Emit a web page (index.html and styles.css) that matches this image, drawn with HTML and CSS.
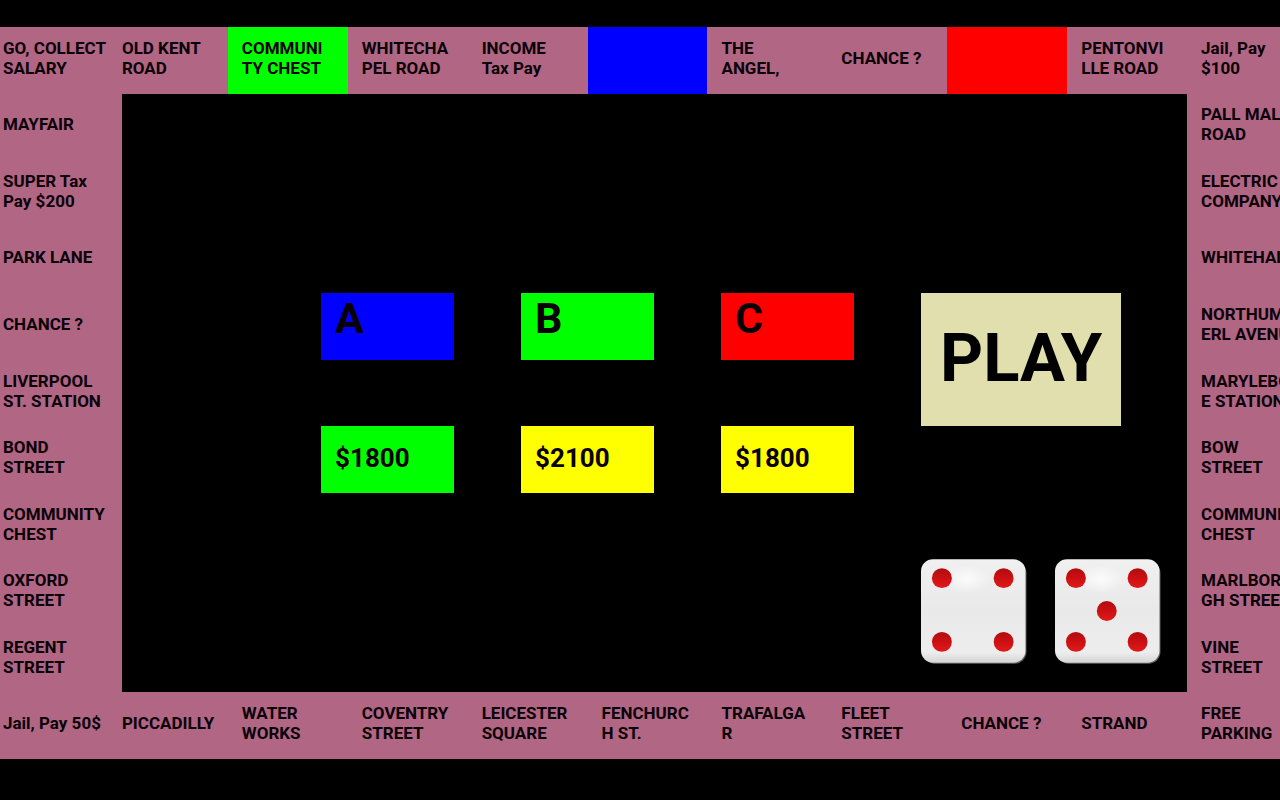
FILE: index.html
```html
<!DOCTYPE html>
<html lang="en">
  <head>
    <meta charset="UTF-8" />
    <meta name="viewport" content="width=device-width, initial-scale=1" />
    <title>Monopoly</title>
    <link rel="stylesheet" href="styles.css">
  </head>
  <body>
    <main class="board">
      <div class="row">
        <div class="tile corner">GO, COLLECT<br>SALARY</div>
        <div class="tile">OLD KENT<br>ROAD</div>
        <div class="tile green">COMMUNI<br>TY CHEST</div>
        <div class="tile">WHITECHA<br>PEL ROAD</div>
        <div class="tile">INCOME<br>Tax Pay</div>
        <div class="tile blue"></div>
        <div class="tile">THE<br>ANGEL,</div>
        <div class="tile">CHANCE ?</div>
        <div class="tile red"></div>
        <div class="tile">PENTONVI<br>LLE ROAD</div>
        <div class="tile">Jail, Pay<br>$100</div>
      </div>

      <div class="middle">
        <div class="side">
          <div class="tile corner">MAYFAIR</div>
          <div class="tile corner">SUPER Tax<br>Pay $200</div>
          <div class="tile corner">PARK LANE</div>
          <div class="tile corner">CHANCE ?</div>
          <div class="tile corner">LIVERPOOL<br>ST. STATION</div>
          <div class="tile corner">BOND<br>STREET</div>
          <div class="tile corner">COMMUNITY<br>CHEST</div>
          <div class="tile corner">OXFORD<br>STREET</div>
          <div class="tile corner">REGENT<br>STREET</div>
        </div>

        <section class="center">
          <div class="player blue">A</div>
          <div class="player green">B</div>
          <div class="player red">C</div>
          <button type="button" class="play-btn">PLAY</button>

          <div class="money green">$1800</div>
          <div class="money yellow">$2100</div>
          <div class="money yellow">$1800</div>

          <div class="dice">
            <svg width="107" height="106" viewBox="0 0 107 106" role="img" aria-label="4">
              <defs>
                <linearGradient id="face" x1="0" y1="0" x2="0" y2="1">
                  <stop offset="0" stop-color="#f0f0f0" />
                  <stop offset="0.5" stop-color="#e9e9e9" />
                  <stop offset="0.9" stop-color="#ededed" />
                  <stop offset="1" stop-color="#d4d4d4" />
                </linearGradient>
                <radialGradient id="shine">
                  <stop offset="0" stop-color="#fff" stop-opacity="0.8" />
                  <stop offset="1" stop-color="#fff" stop-opacity="0" />
                </radialGradient>
                <linearGradient id="pip" x1="0" y1="0" x2="0" y2="1">
                  <stop offset="0" stop-color="#b00c10" />
                  <stop offset="0.5" stop-color="#cc1012" />
                  <stop offset="1" stop-color="#e01a1a" />
                </linearGradient>
              </defs>
              <rect x="2" y="2" width="104" height="103" rx="12" fill="#5c6262" />
              <rect x="0" y="0" width="105" height="104" rx="12" fill="url(#face)" />
              <ellipse cx="46" cy="20" rx="24" ry="14" fill="url(#shine)" />
              <g fill="url(#pip)">
                <circle cx="21" cy="19" r="10" />
                <circle cx="83" cy="19" r="10" />
                <circle cx="21" cy="83" r="10" />
                <circle cx="83" cy="83" r="10" />
              </g>
            </svg>
            <svg width="107" height="106" viewBox="0 0 107 106" role="img" aria-label="5">
              <rect x="2" y="2" width="104" height="103" rx="12" fill="#5c6262" />
              <rect x="0" y="0" width="105" height="104" rx="12" fill="url(#face)" />
              <ellipse cx="46" cy="20" rx="24" ry="14" fill="url(#shine)" />
              <g fill="url(#pip)">
                <circle cx="21" cy="19" r="10" />
                <circle cx="83" cy="19" r="10" />
                <circle cx="52" cy="52" r="10" />
                <circle cx="21" cy="83" r="10" />
                <circle cx="83" cy="83" r="10" />
              </g>
            </svg>
          </div>
        </section>

        <div class="side">
          <div class="tile">PALL MALL<br>ROAD</div>
          <div class="tile">ELECTRIC<br>COMPANY</div>
          <div class="tile">WHITEHALL</div>
          <div class="tile">NORTHUMB<br>ERL AVENUE</div>
          <div class="tile">MARYLEBON<br>E STATION</div>
          <div class="tile">BOW<br>STREET</div>
          <div class="tile">COMMUNITY<br>CHEST</div>
          <div class="tile">MARLBOROU<br>GH STREET</div>
          <div class="tile">VINE<br>STREET</div>
        </div>
      </div>

      <div class="row">
        <div class="tile corner">Jail, Pay 50$</div>
        <div class="tile">PICCADILLY</div>
        <div class="tile">WATER<br>WORKS</div>
        <div class="tile">COVENTRY<br>STREET</div>
        <div class="tile">LEICESTER<br>SQUARE</div>
        <div class="tile">FENCHURC<br>H ST.</div>
        <div class="tile">TRAFALGA<br>R</div>
        <div class="tile">FLEET<br>STREET</div>
        <div class="tile">CHANCE ?</div>
        <div class="tile">STRAND</div>
        <div class="tile">FREE<br>PARKING</div>
      </div>
    </main>
  </body>
</html>
```

FILE: styles.css
```css
* {
  margin: 0;
  padding: 0;
  box-sizing: border-box;
}

body {
  font-family: Roboto, sans-serif;
  font-weight: 700;
  color: #0a0008;
  background: #000;
  min-height: 100vh;
  padding: 27px 0 41px;
  display: flex;
  overflow-x: hidden;
}

/* the last column runs past the right edge */
.board {
  flex: none;
  width: calc(100% + 40px);
  display: flex;
  flex-direction: column;
}

.row {
  flex: 1 1 0;
  display: grid;
  grid-template-columns: 108fr repeat(9, 120fr) 133fr;
}

.middle {
  flex: 9 1 0;
  display: grid;
  grid-template-columns: 122fr 1066fr 133fr;
}

.side {
  display: flex;
  flex-direction: column;
}

.tile {
  flex: 1 1 0;
  min-width: 0;
  padding: 0 0 5px 14px;
  display: flex;
  align-items: center;
  font-size: 17px;
  line-height: 20px;
  white-space: nowrap;
  background: #b16684;
}

.corner {
  padding-left: 3px;
}

.center {
  display: grid;
  grid-template-columns: repeat(3, 133px) 240px;
  grid-template-rows: 67px 67px 106px;
  gap: 66px 67px;
  justify-content: end;
  align-content: end;
  padding: 0 26px 27px 0;
}

.player,
.money {
  padding-left: 14px;
}

.player {
  font-size: 43px;
  line-height: 51px;
}

.money {
  font-size: 26px;
  line-height: 64px;
}

.play-btn {
  grid-row: 1 / 3;
  grid-column: 4;
  width: 200px;
  height: 133px;
  padding-bottom: 3px;
  border: none;
  background: #e1dfad;
  color: #000;
  font: inherit;
  font-size: 67px;
  cursor: pointer;
}

.dice {
  grid-column: 4;
  display: flex;
  gap: 27px;
}

.blue {
  background: #00f;
}

.green {
  background: #0f0;
}

.red {
  background: #f00;
}

.yellow {
  background: #ff0;
}
```
